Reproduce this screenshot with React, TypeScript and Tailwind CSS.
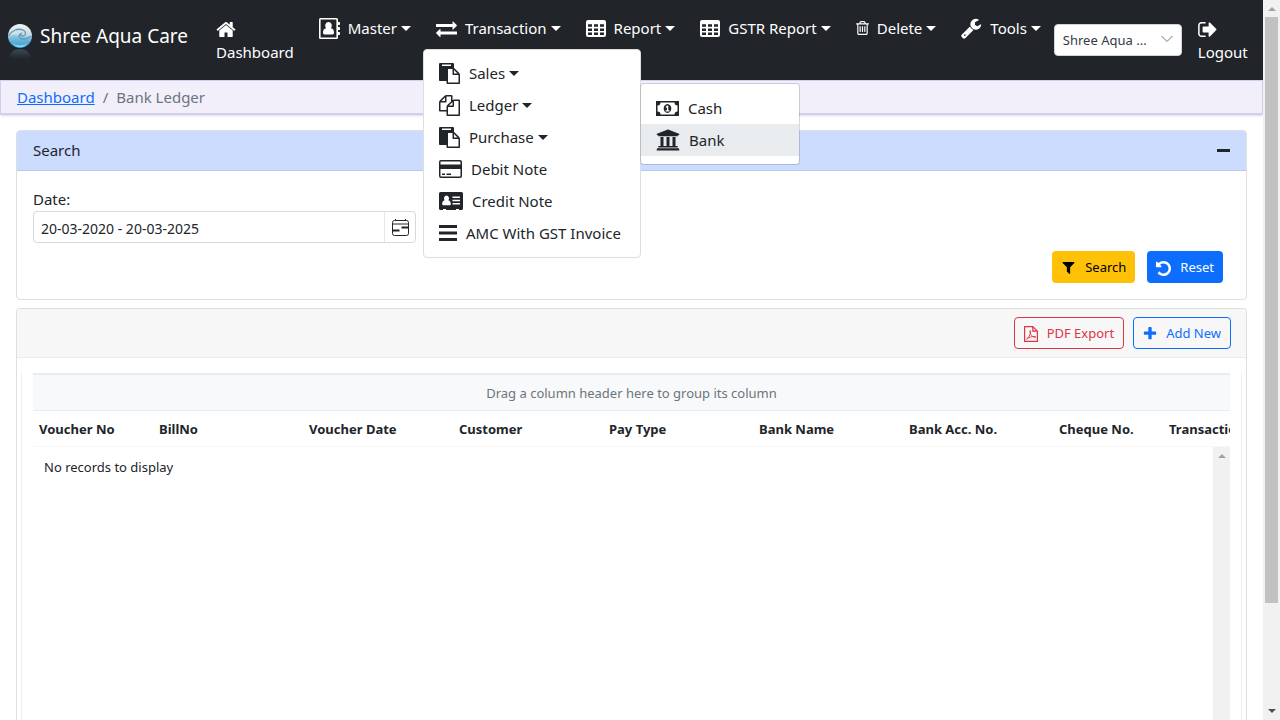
import type { ReactNode } from "react";
import { FaUniversity } from "react-icons/fa";

function Glyph({ box, size, d }: { box: string; size: string; d: string }) {
  return (
    <svg viewBox={box} className={`${size} shrink-0`} fill="currentColor" fillRule="evenodd" aria-hidden="true">
      <path d={d} />
    </svg>
  );
}

const HOME =
  "M1472 992v480q0 26-19 45t-45 19h-384v-384h-256v384h-384q-26 0-45-19t-19-45v-480q0-1 .5-3t.5-3l575-474 575 474q1 2 1 6zm223-69l-62 74q-8 9-21 11h-3q-13 0-21-7l-692-577-692 577q-12 8-24 7-13-2-21-11l-62-74q-8-10-7-23.5t11-21.5l719-599q32-26 76-26t76 26l244 204v-195q0-14 9-23t23-9h192q14 0 23 9t9 23v408l219 182q10 8 11 21.5t-7 23.5z";
const EXCHANGE =
  "M1792 1184v192q0 13-9.5 22.5t-22.5 9.5h-1376v192q0 13-9.5 22.5t-22.5 9.5q-12 0-24-10l-319-320q-9-9-9-22 0-14 9-23l320-320q9-9 23-9 13 0 22.5 9.5t9.5 22.5v192h1376q13 0 22.5 9.5t9.5 22.5zm0-544q0 14-9 23l-320 320q-9 9-23 9-13 0-22.5-9.5t-9.5-22.5v-192h-1376q-13 0-22.5-9.5t-9.5-22.5v-192q0-13 9.5-22.5t22.5-9.5h1376v-192q0-13 9.5-22.5t22.5-9.5q12 0 24 10l319 319q9 9 9 23z";
const TRASH =
  "M704 736v576q0 14-9 23t-23 9h-64q-14 0-23-9t-9-23v-576q0-14 9-23t23-9h64q14 0 23 9t9 23zm256 0v576q0 14-9 23t-23 9h-64q-14 0-23-9t-9-23v-576q0-14 9-23t23-9h64q14 0 23 9t9 23zm256 0v576q0 14-9 23t-23 9h-64q-14 0-23-9t-9-23v-576q0-14 9-23t23-9h64q14 0 23 9t9 23zm128 724v-948h-896v948q0 22 7 40.5t14.5 27 10.5 8.5h832q3 0 10.5-8.5t14.5-27 7-40.5zm-672-1076h448l-48-117q-7-9-17-11h-317q-10 2-17 11zm928 32v64q0 14-9 23t-23 9h-96v948q0 83-47 143.5t-113 60.5h-832q-66 0-113-58.5t-47-141.5v-952h-96q-14 0-23-9t-9-23v-64q0-14 9-23t23-9h309l70-167q15-37 54-63t79-26h320q40 0 79 26t54 63l70 167h309q14 0 23 9t9 23z";
const WRENCH =
  "M448 1472q0-26-19-45t-45-19-45 19-19 45 19 45 45 19 45-19 19-45zm644-420l-682 682q-37 37-90 37-52 0-91-37l-106-108q-38-36-38-90 0-53 38-91l681-681q39 98 114.5 173.5t173.5 114.5zm634-435q0 39-23 106-47 134-164.5 217.5t-258.5 83.5q-185 0-316.5-131.5t-131.5-316.5 131.5-316.5 316.5-131.5q58 0 121.5 16.5t107.5 46.5q16 11 16 28t-16 28l-293 169v224l193 107q5-3 79-48.5t135.5-81 70.5-35.5q15 0 23.5 10t8.5 25z";
const SIGN_OUT =
  "M704 1440q0 4 1 20t.5 26.5-3 23.5-10 19.5-20.5 6.5h-320q-119 0-203.5-84.5t-84.5-203.5v-704q0-119 84.5-203.5t203.5-84.5h320q13 0 22.5 9.5t9.5 22.5q0 4 1 20t.5 26.5-3 23.5-10 19.5-20.5 6.5h-320q-66 0-113 47t-47 113v704q0 66 47 113t113 47h312l11.5 1 11.5 3 8 5.5 7 9 2 13.5zm928-544q0 26-19 45l-544 544q-19 19-45 19t-45-19-19-45v-288h-448q-26 0-45-19t-19-45v-384q0-26 19-45t45-19h448v-288q0-26 19-45t45-19 45 19l544 544q19 19 19 45z";
const PASTE =
  "M768 1664h896v-640h-416q-40 0-68-28t-28-68v-416h-384v1152zm256-1440v-64q0-13-9.5-22.5t-22.5-9.5h-704q-13 0-22.5 9.5t-9.5 22.5v64q0 13 9.5 22.5t22.5 9.5h704q13 0 22.5-9.5t9.5-22.5zm256 672h299l-299-299v299zm512 128v672q0 40-28 68t-68 28h-960q-40 0-68-28t-28-68v-160h-544q-40 0-68-28t-28-68v-1344q0-40 28-68t68-28h1088q40 0 68 28t28 68v328q21 13 36 28l408 408q28 28 48 76t20 88z";
const FILES =
  "M1696 384q40 0 68 28t28 68v1216q0 40-28 68t-68 28h-960q-40 0-68-28t-28-68v-288h-544q-40 0-68-28t-28-68v-672q0-40 20-88t48-76l408-408q28-28 76-48t88-20h416q40 0 68 28t28 68v328q68-40 128-40h416zm-544 213l-299 299h299v-299zm-640-384l-299 299h299v-299zm196 647l316-316v-416h-384v416q0 40-28 68t-68 28h-416v640h512v-256q0-40 20-88t48-76zm956 804v-1152h-384v416q0 40-28 68t-68 28h-416v640h896z";
const FILTER =
  "M1595 295q17 41-14 70l-493 493v742q0 42-39 59-13 5-25 5-27 0-45-19l-256-256q-19-19-19-45v-486l-493-493q-31-29-14-70 17-39 59-39h1280q42 0 59 39z";
const UNDO =
  "M1664 896q0 156-61 298t-164 245-245 164-298 61q-172 0-327-72.5t-264-204.5q-7-10-6.5-22.5t8.5-20.5l137-138q10-9 25-9 16 2 23 12 73 95 179 147t225 52q104 0 198.5-40.5t163.5-109.5 109.5-163.5 40.5-198.500-40.500-198.500-109.500-163.500-163.500-109.500-198.500-40.500q-98 0-188 35.500t-160 101.500l137 138q31 30 14 69-17 40-59 40h-448q-26 0-45-19t-19-45v-448q0-42 40-59 39-17 69 14l130 129q107-101 244.500-156.500t284.500-55.500q156 0 298 61t245 164 164 245 61 298z";
const PLUS =
  "M1600 736v192q0 40-28 68t-68 28h-416v416q0 40-28 68t-68 28h-192q-40 0-68-28t-28-68v-416h-416q-40 0-68-28t-28-68v-192q0-40 28-68t68-28h416v-416q0-40 28-68t68-28h192q40 0 68 28t28 68v416h416q40 0 68 28t28 68z";
const TABLE =
  "M2 0h16a2 2 0 0 1 2 2v13a2 2 0 0 1-2 2H2a2 2 0 0 1-2-2V2a2 2 0 0 1 2-2zM2 4.200v2.500h4V4.200zM8 4.200v2.500h4V4.200zM14 4.200v2.500h4V4.200zM2 8.400v2.500h4V8.400zM8 8.400v2.500h4V8.400zM14 8.400v2.500h4V8.400zM2 12.500V15h4v-2.500zM8 12.500V15h4v-2.500zM14 12.500V15h4v-2.500z";
const ADDRESS_BOOK =
  "M1.5 0h16A1.5 1.5 0 0 1 19 1.5V4h1.2q.8 0 .8.7v1.6q0 .7-.8.7H19v2h1.2q.8 0 .8.7v1.6q0 .7-.8.7H19v2h1.2q.8 0 .8.7v1.6q0 .7-.8.7H19v2.500A1.500 1.500 0 0 1 17.500 21h-16A1.500 1.500 0 0 1 0 19.500v-18A1.500 1.500 0 0 1 1.500 0zM1.600 1.600v17.800h15.800V1.600zM9.500 4a3.400 3.700 0 0 1 2.500 6.200c2 .3 3 1.800 3 4.600 0 1-.6 1.700-1.500 1.700h-8c-.9 0-1.500-.7-1.500-1.700 0-2.800 1-4.300 3-4.600A3.400 3.700 0 0 1 9.500 4z";
const CREDIT_CARD =
  "M2 0h19a2 2 0 0 1 2 2v14a2 2 0 0 1-2 2H2a2 2 0 0 1-2-2V2a2 2 0 0 1 2-2zM1.500 2v2.500h20V2l-.5-.5H2zM1.500 9v7l.5.500h19l.5-.500V9zM3 13.500h3V15H3zM7.500 13.500h4.500V15H7.500z";
const ADDRESS_CARD =
  "M1.500 0h21A1.500 1.500 0 0 1 24 1.500v15a1.500 1.500 0 0 1-1.500 1.500H20v-1h-3v1H7v-1H4v1H1.500A1.500 1.500 0 0 1 0 16.500v-15A1.500 1.500 0 0 1 1.500 0zM7.500 3.500a2.600 2.900 0 0 0-1.900 4.800C4 8.600 3.200 9.800 3.200 12c0 .8.4 1.300 1.100 1.300h6.400c.7 0 1.100-.5 1.100-1.300 0-2.200-.8-3.400-2.400-3.700A2.600 2.900 0 0 0 7.500 3.500zM13.500 4.500V6h7.500V4.500zM13.500 7.800v1.500h7.500V7.800zM13.500 11v1.500h7.500V11z";
const BARS = "M0 0h18v3H0zM0 6.500h18v3H0zM0 13h18v3H0z";
const MONEY =
  "M0 0h23v15H0zM4.500 1.500a3 3 0 0 1-3 3v6a3 3 0 0 1 3 3h14a3 3 0 0 1 3-3v-6a3 3 0 0 1-3-3zM11.500 3c2.400 0 3.800 2.200 3.800 4.500S13.900 12 11.500 12 7.700 9.800 7.700 7.500 9.100 3 11.500 3zM11 4.500 9.500 6l.7.800.7-.5V9.300H9.600v1.100h3.900V9.300h-1.200V4.500z";

function Caret() {
  return <span className="ml-1 inline-block border-x-5 border-t-5 border-x-transparent border-t-current" />;
}

function NavButton({ icon, label }: { icon: ReactNode; label: string }) {
  return (
    <button type="button" className="flex h-6 items-center whitespace-nowrap">
      {icon}
      <span className="ml-2">{label}</span>
      <Caret />
    </button>
  );
}

function MenuItem({
  icon,
  label,
  caret = false,
  active = false,
}: {
  icon: ReactNode;
  label: string;
  caret?: boolean;
  active?: boolean;
}) {
  return (
    <a
      href="#"
      className={`flex h-8 items-center whitespace-nowrap px-[15px] ${active ? "bg-[#e9ecef]" : ""}`}
    >
      {icon}
      <span className="ml-[9px]">{label}</span>
      {caret && <Caret />}
    </a>
  );
}

function Logo() {
  return (
    <svg viewBox="0 0 24 36" className="h-9 w-6 shrink-0" aria-hidden="true">
      <defs>
        <linearGradient id="sphere" x1="0" y1="0" x2="0" y2="1">
          <stop offset="0" stopColor="#f4f4f4" />
          <stop offset="0.45" stopColor="#c4dae4" />
          <stop offset="0.7" stopColor="#5aaad4" />
          <stop offset="1" stopColor="#1372b4" />
        </linearGradient>
        <linearGradient id="mirror" x1="0" y1="0" x2="0" y2="1">
          <stop offset="0" stopColor="#3b5563" stopOpacity="0.8" />
          <stop offset="1" stopColor="#3b5563" stopOpacity="0" />
        </linearGradient>
      </defs>
      <circle cx="12" cy="12" r="12" fill="url(#sphere)" />
      <path d="M0.500 12C4 6 10 4 15 6c3 1.500 3.500 5 .5 6-2 .5-3.500-1-2.500-2.500-3 1-2.500 5 1.500 5.500 4 .5 7-2 9-3" fill="none" stroke="#5c97b6" strokeWidth="1.300" />
      <path d="M1 14c4-4 6-4 9-2 2 4 8 6 13 2-1 6-6 9-11 9S2 20 1 14z" fill="#6bbbe0" opacity="0.500" />
      <path d="M4 19c4 3 12 3 16 0-2 3-5 4.500-8 4.500S6 22 4 19z" fill="#7fd4f2" />
      <path d="M1 35a12 12 0 0 1 3-7c4-4 12-4 16 0a12 12 0 0 1 3 7z" fill="url(#mirror)" />
    </svg>
  );
}

function Header() {
  const big = "h-[21px] w-[21px]";
  return (
    <header className="flex h-20 items-start bg-[#212529] pt-4 text-white">
      <a href="#" className="flex items-start pl-2">
        <span className="pt-2">
          <Logo />
        </span>
        <span className="ml-2 whitespace-nowrap pt-[5px] text-[19px] leading-[30px]">Shree Aqua Care</span>
      </a>
      <nav className="ml-7">
        <ul className="flex items-start gap-[25px]">
          <li>
            <a href="#" className="block">
              <span className="flex h-6 items-center pt-[2px]">
                <Glyph box="50 250 1692 1286" size="h-[15px] w-5" d={HOME} />
              </span>
              <span className="block leading-6">Dashboard</span>
            </a>
          </li>
          <li>
            <NavButton icon={<Glyph box="0 0 21 21" size={big} d={ADDRESS_BOOK} />} label="Master" />
          </li>
          <li className="relative">
            <NavButton icon={<Glyph box="0 0 1792 1792" size={big} d={EXCHANGE} />} label="Transaction" />
            <TransactionMenu />
          </li>
          <li>
            <NavButton icon={<Glyph box="0 0 20 17" size="h-[17px] w-5" d={TABLE} />} label="Report" />
          </li>
          <li>
            <NavButton icon={<Glyph box="0 0 20 17" size="h-[17px] w-5" d={TABLE} />} label="GSTR Report" />
          </li>
          <li>
            <NavButton icon={<Glyph box="192 128 1408 1536" size="h-[14px] w-[13px]" d={TRASH} />} label="Delete" />
          </li>
          <li>
            <NavButton icon={<Glyph box="64 64 1728 1728" size={big} d={WRENCH} />} label="Tools" />
          </li>
        </ul>
      </nav>
      <div className="relative ml-[13px] mt-2 h-8 w-32 shrink-0">
        <select
          aria-label="Company"
          className="h-full w-full appearance-none rounded-[4px] border border-[#ced4da] bg-white px-2 pt-[2px] text-[13px] text-[#343a40]"
        >
          <option>Shree Aqua ...</option>
        </select>
        <svg viewBox="0 0 12 8" className="pointer-events-none absolute right-[9px] top-[11px] h-2 w-3" fill="none" stroke="#6c757d" aria-hidden="true">
          <path d="M.5 1 6 6.500 11.500 1" />
        </svg>
      </div>
      <a href="#" className="ml-4 block">
        <span className="flex h-6 items-center pt-[2px]">
          <Glyph box="96 256 1536 1280" size="h-[15px] w-[19px]" d={SIGN_OUT} />
        </span>
        <span className="block leading-6">Logout</span>
      </a>
    </header>
  );
}

function TransactionMenu() {
  const big = "h-[21px] w-[21px]";
  return (
    <ul className="absolute -left-[13px] top-[33px] z-10 min-w-[218px] rounded-[4px] border border-[#dcdee0] bg-white pb-2 pt-[7px] text-[#212529]">
      <li>
        <MenuItem icon={<Glyph box="0 0 1792 1792" size={big} d={PASTE} />} label="Sales" caret />
      </li>
      <li className="relative">
        <MenuItem icon={<Glyph box="0 0 1792 1792" size={big} d={FILES} />} label="Ledger" caret />
        <ul className="absolute left-full -top-[6px] w-40 rounded-[4px] border border-black/15 bg-white bg-clip-padding py-2">
          <li>
            <MenuItem icon={<Glyph box="0 0 23 15" size="h-[15px] w-[23px]" d={MONEY} />} label="Cash" />
          </li>
          <li>
            <MenuItem icon={<FaUniversity size={24} className="shrink-0" />} label="Bank" active />
          </li>
        </ul>
      </li>
      <li>
        <MenuItem icon={<Glyph box="0 0 1792 1792" size={big} d={PASTE} />} label="Purchase" caret />
      </li>
      <li>
        <MenuItem icon={<Glyph box="0 0 23 18" size="h-[18px] w-[23px]" d={CREDIT_CARD} />} label="Debit Note" />
      </li>
      <li>
        <MenuItem icon={<Glyph box="0 0 24 18" size="h-[18px] w-6" d={ADDRESS_CARD} />} label="Credit Note" />
      </li>
      <li>
        <MenuItem icon={<Glyph box="0 0 18 16" size="h-4 w-[18px]" d={BARS} />} label="AMC With GST Invoice" />
      </li>
    </ul>
  );
}

function SearchCard() {
  return (
    <section className="rounded-[4px] border border-[#dfdfdf] bg-white">
      <div className="flex h-10 items-center justify-between rounded-t-[3px] border-b border-[#b9c8ec] bg-[#ccdcff] px-4">
        <h2>Search</h2>
        <button type="button" aria-label="Collapse" className="flex h-6 items-center">
          <span className="h-[3px] w-[13px] bg-[#212529]" />
        </button>
      </div>
      <form className="px-4 pb-4 pt-4">
        <label htmlFor="date" className="block leading-6">
          Date:
        </label>
        <div className="flex h-8 w-full max-w-[383px] rounded-[4px] border border-[#d5dae0]">
          <input
            id="date"
            type="text"
            defaultValue="20-03-2020 - 20-03-2025"
            className="min-w-0 flex-1 rounded-l-[4px] px-[7px] pt-[2px] text-[14px] outline-none"
          />
          <button type="button" aria-label="Open calendar" className="flex w-[31px] items-center justify-center border-l border-[#e3e6ea]">
            <svg viewBox="0 0 17 17" className="h-[17px] w-[17px]" fill="none" stroke="#212529" aria-hidden="true">
              <rect x="0.500" y="1.500" width="16" height="15" rx="2" />
              <path d="M.5 5h16M3.500 0v2M13.500 0v2" />
              <path d="M9.500 8.500H16M1 11.500h6.500" strokeWidth="2" />
            </svg>
          </button>
        </div>
        <div className="mt-2 flex justify-end gap-3 pr-[7px] text-[13px]">
          <button type="button" className="flex h-8 items-center gap-[9px] rounded-[4px] bg-[#ffc107] px-[9px] pt-[2px] text-black">
            <Glyph box="150 256 1492 1408" size="h-3 w-[15px]" d={FILTER} />
            Search
          </button>
          <button type="button" className="flex h-8 items-center gap-[9px] rounded-[4px] bg-[#0d6efd] px-[9px] pt-[2px] text-white">
            <Glyph box="128 128 1536 1536" size="h-[15px] w-[15px]" d={UNDO} />
            Reset
          </button>
        </div>
      </form>
    </section>
  );
}

const columns = [
  { label: "Voucher No", width: "w-[120px]" },
  { label: "BillNo", width: "w-[150px]" },
  { label: "Voucher Date", width: "w-[150px]" },
  { label: "Customer", width: "w-[150px]" },
  { label: "Pay Type", width: "w-[150px]" },
  { label: "Bank Name", width: "w-[150px]" },
  { label: "Bank Acc. No.", width: "w-[150px]" },
  { label: "Cheque No.", width: "w-[110px]" },
  { label: "Transaction No.", width: "w-[150px]" },
];

function GridCard() {
  return (
    <section className="mt-2 flex min-h-0 flex-1 flex-col rounded-t-[4px] border border-b-0 border-[#dfdfdf] bg-white">
      <div className="flex h-[49px] shrink-0 items-center justify-end gap-[9px] rounded-t-[3px] border-b border-[#ececec] bg-[#f7f7f7] px-[15px] text-[13px]">
        <button type="button" className="flex h-8 items-center gap-[9px] rounded-[4px] border border-[#dc3545] px-[9px] pt-[2px] text-[#dc3545]">
          <svg viewBox="0 0 14 16" className="h-4 w-[14px]" fill="none" stroke="currentColor" aria-hidden="true">
            <path d="M.6.6h8.200l4.600 4.600v10.200H.6zM8.800.6v4.600h4.600" strokeWidth="1.200" />
            <path d="M2.500 13.200c2-1.200 4-4.600 4.200-8 .2-.7-.8-.7-.8 0 .2 3 2 5.800 5.100 6.200 1 0 1-.9 0-1-3-.1-6.200.9-8.500 2.800z" strokeWidth="0.900" />
          </svg>
          PDF Export
        </button>
        <button type="button" className="flex h-8 items-center gap-[9px] rounded-[4px] border border-[#0d6efd] px-[9px] pt-[2px] text-[#0d6efd]">
          <Glyph box="96 128 1600 1600" size="h-[14px] w-[14px]" d={PLUS} />
          Add New
        </button>
      </div>
      <div className="mx-1 mt-[15px] flex min-h-0 flex-1 flex-col border-x border-[#eeeeee] px-[11px] text-[13px]">
        <div className="flex h-[38px] shrink-0 items-center justify-center border-b border-t-2 border-[#e9ecef] bg-[#f8f9fa] pt-[2px] text-[#6c757d]">
          Drag a column header here to group its column
        </div>
        <div className="shrink-0 overflow-hidden border-b border-[#f7f7f7]">
          <table className="w-[1280px] table-fixed">
            <thead>
              <tr className="h-[35px]">
                {columns.map((column) => (
                  <th key={column.label} scope="col" className={`${column.width} whitespace-nowrap px-[6px] pt-[2px] text-left font-bold`}>
                    {column.label}
                  </th>
                ))}
              </tr>
            </thead>
          </table>
        </div>
        <div className="flex min-h-0 flex-1">
          <p className="flex-1 px-[11px] pt-[10px] leading-5">No records to display</p>
          <div className="flex w-[17px] justify-center bg-[#f1f1f1] pt-[7px]">
            <span className="h-0 border-x-4 border-b-4 border-x-transparent border-b-[#a3a3a3]" />
          </div>
        </div>
      </div>
    </section>
  );
}

export default function App() {
  return (
    <div className="flex h-screen overflow-hidden bg-white font-['Noto_Sans','Open_Sans',sans-serif] text-[15px] text-[#212529]">
      <div className="flex min-w-0 flex-1 flex-col">
        <Header />
        <nav aria-label="Breadcrumb" className="flex h-[35px] shrink-0 items-center border border-b-2 border-[#cfd0ee] bg-[#f2eefa] px-4 shadow">
          <a href="#" className="text-[#0d6efd] underline">
            Dashboard
          </a>
          <span className="px-2 text-[#6c757d]">/</span>
          <span className="text-[#6c757d]">Bank Ledger</span>
        </nav>
        <main className="flex min-h-0 flex-1 flex-col px-4 pt-[15px]">
          <SearchCard />
          <GridCard />
        </main>
      </div>
      <div className="flex w-[17px] shrink-0 flex-col items-center bg-[#f1f1f1] py-[7px]" aria-hidden="true">
        <span className="h-0 border-x-4 border-b-4 border-x-transparent border-b-[#a3a3a3]" />
        <span className="mb-auto mt-[6px] h-[83%] w-[13px] bg-[#c1c1c1]" />
        <span className="h-0 border-x-4 border-t-4 border-x-transparent border-t-[#505050]" />
      </div>
    </div>
  );
}
